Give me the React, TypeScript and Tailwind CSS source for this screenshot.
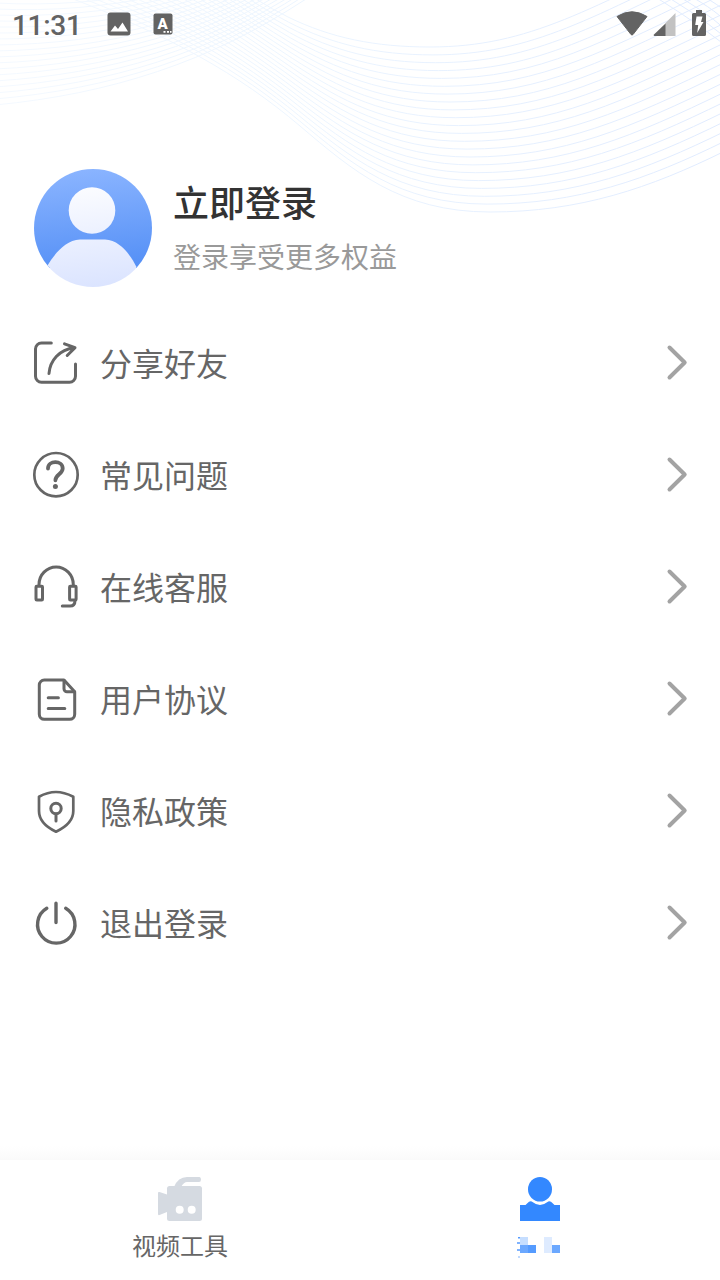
import React, { useState } from "react";

const LINE_COUNT = 22;

const lerp = (a: number, b: number, t: number) => a + (b - a) * t;

// Interpolates every number of two point lists with the same length
const mix = (a: number[], b: number[], t: number) => a.map((v, i) => lerp(v, b[i], t).toFixed(1));

const WAVE_TOP = [180, -52, 210, -35, 245, -4, 288, 17, 331, 38, 375, 47, 430, 47, 530, 47, 590, 8, 725, -56];
const WAVE_BOTTOM = [60, -6, 170, 35, 240, 75, 300, 126, 352, 170, 400, 212, 490, 212, 580, 212, 650, 188, 725, 151];

const Waves: React.FC = () => (
  <svg className="absolute left-0 top-0" width="720" height="230" viewBox="0 0 720 230" fill="none">
    <defs>
      <linearGradient id="wave" gradientUnits="userSpaceOnUse" x1="0" y1="0" x2="720" y2="0">
        <stop offset="0" stopColor="#f4f9ff" />
        <stop offset="0.4" stopColor="#ecf5ff" />
        <stop offset="1" stopColor="#e0ebff" />
      </linearGradient>
    </defs>
    <g stroke="url(#wave)" strokeWidth="1">
      {Array.from({ length: LINE_COUNT }, (_, i) => {
        const p = mix(WAVE_TOP, WAVE_BOTTOM, i / (LINE_COUNT - 1));
        return (
          <path
            key={i}
            d={`M${p[0]} ${p[1]}C${p.slice(2, 8).join(" ")}C${p.slice(8, 14).join(" ")}C${p.slice(14, 20).join(" ")}`}
          />
        );
      })}
      {Array.from({ length: 20 }, (_, i) => (
        <path key={i} d={`M-5 ${105 - i * 6}C110 ${94 - i * 5} 210 ${62 - i * 4.5} ${306 - i * 2} ${-1 - i * 3}`} />
      ))}
      {Array.from({ length: 6 }, (_, i) => (
        <path key={i} d={`M${640 + i * 12} -12Q${682 + i * 11} ${12 - i} 725 ${45 - i * 8}`} />
      ))}
    </g>
  </svg>
);

const StatusBar: React.FC = () => (
  <div className="relative flex h-12 items-center justify-between pl-3 pr-[13px] text-[#636363]">
    <div className="flex items-center">
      <span className="w-[95px] pt-[3px] font-[Roboto,sans-serif] text-[28px] font-medium leading-none tracking-[-0.3px]">11:31</span>
      <svg width="24" height="24" viewBox="0 0 24 24">
        <rect x="0.5" y="0.5" width="23" height="23" rx="3" fill="currentColor" />
        <path d="M3.500 19.500l4.500-6 3 3.500 4.500-6.500 5.500 9z" fill="#fff" />
      </svg>
      <svg className="ml-[22px]" width="20" height="22" viewBox="0 0 20 22">
        <rect x="0.500" y="0.500" width="19" height="21" rx="2" fill="currentColor" />
        <text x="9.700" y="15.500" textAnchor="middle" fontSize="15" fontWeight="900" fontFamily="Roboto, sans-serif" fill="#fff">A</text>
        <path d="M10.500 18.800h2M14 18.800h2M17 18.800h1.500" stroke="#fff" strokeWidth="1.800" />
      </svg>
    </div>
    <div className="flex items-center">
      <svg width="32" height="26" viewBox="0 0 32 26">
        <path d="M1 5.500Q16-4 31 5.500L17 23.500q-1 1-2 0z" fill="currentColor" stroke="currentColor" strokeLinejoin="round" />
      </svg>
      <svg className="ml-[5px]" width="23" height="26" viewBox="0 0 23 26">
        <path d="M22.500 2v23H12V12.500z" fill="#c2c2c2" />
        <path d="M12.500 12.500V25H1.500q-1.500-.5-.5-1.500z" fill="currentColor" />
      </svg>
      <svg className="-mt-0.5 ml-[15px]" width="16" height="28" viewBox="0 0 16 28">
        <path d="M5 1h6v3h2.500q1.500 0 1.500 1.500v20q0 1.500-1.500 1.500h-11Q1 27 1 25.500v-20Q1 4 2.500 4H5z" fill="currentColor" />
        <path d="M5.500 7.500h6l-1.500 5.500h2.500L6.200 24l1-8H4.200z" fill="#fff" />
      </svg>
    </div>
  </div>
);

const Avatar: React.FC = () => (
  <svg width="118" height="118" viewBox="0 0 118 118">
    <defs>
      <linearGradient id="disc" x1="0.45" y1="0" x2="0.55" y2="1">
        <stop offset="0" stopColor="#8ab4ff" />
        <stop offset="0.85" stopColor="#5590f6" />
      </linearGradient>
      <linearGradient id="figure" gradientUnits="userSpaceOnUse" x1="50" y1="18" x2="62" y2="118">
        <stop offset="0" stopColor="#fbfcff" />
        <stop offset="1" stopColor="#dbe4ff" />
      </linearGradient>
      <clipPath id="round">
        <circle cx="59" cy="59" r="59" />
      </clipPath>
      <clipPath id="upper">
        <path d="M0 0h118v99H0z" />
      </clipPath>
    </defs>
    <circle cx="59" cy="59" r="59" fill="url(#disc)" clipPath="url(#upper)" />
    <g fill="url(#figure)" clipPath="url(#round)">
      <circle cx="58" cy="41.500" r="23.300" />
      <path d="M13.500 96.500C20 86 31 71 46 70.600H71C86 71 97 87 102.500 98L102 118H14z" />
    </g>
  </svg>
);

const ICONS: Record<string, React.ReactNode> = {
  share: (
    <>
      <path d="M19.300 4H9.500a6 6 0 0 0-6 6v27.300a6 6 0 0 0 6 6h28a6 6 0 0 0 6-6V25" />
      <path d="M17 34.500C18 22 27 10.500 42.500 8.800M32.500 4.800L43 8.700l-7.800 7.800" />
    </>
  ),
  question: (
    <>
      <circle cx="24" cy="23.700" r="21.700" strokeWidth="2.700" />
      <path d="M16 17.500c0-8.500 14.700-8.500 14.700 0 0 5.500-7.300 6-7.300 11.800" strokeWidth="3.800" />
      <circle cx="23.400" cy="35.500" r="2.500" fill="currentColor" stroke="none" />
    </>
  ),
  headset: (
    <>
      <path d="M7 22.500V21.500a17.100 17.500 0 0 1 34.300 0v1" />
      <rect x="4" y="23.300" width="6.500" height="13.700" rx="0.800" />
      <rect x="37.600" y="23.300" width="6.500" height="13.700" rx="0.800" />
      <path d="M43 37.500c0 4-1.500 5.600-5 5.600h-7.700" />
    </>
  ),
  doc: (
    <>
      <path d="M32 5H12.300a5 5 0 0 0-5 5v29.300a5 5 0 0 0 5 5h25.400a5 5 0 0 0 5-5V16.700z" />
      <path d="M32 5.500v8.200a3 3 0 0 0 3 3h7.500M16.200 22.700h10.200M16.200 33.500h16.600" />
    </>
  ),
  shield: (
    <>
      <path d="M24 5C18.500 5 11.500 7.300 7 9.800V24C7 33 13 39.500 24 44.700 35 39.500 41.300 33 41.300 24V9.800C36.500 7.300 29.500 5 24 5z" strokeWidth="2.700" />
      <circle cx="24" cy="21.500" r="5.200" />
      <path d="M24 27v7" />
    </>
  ),
  power: <path d="M14.800 9.300a18.700 18.700 0 1 0 18.900 0M24 4.200v19.300" strokeWidth="3.400" />,
};

const MENU = [
  { icon: "share", label: "分享好友" },
  { icon: "question", label: "常见问题" },
  { icon: "headset", label: "在线客服" },
  { icon: "doc", label: "用户协议" },
  { icon: "shield", label: "隐私政策" },
  { icon: "power", label: "退出登录" },
];

const MenuRow: React.FC<{ icon: string; label: string }> = ({ icon, label }) => (
  <button className="flex h-28 w-full items-center pl-8 pr-[31px] text-left text-[#666]">
    <svg width="48" height="48" viewBox="0 0 48 48" fill="none" stroke="currentColor" strokeWidth="3" strokeLinecap="round" strokeLinejoin="round">
      {ICONS[icon]}
    </svg>
    <span className="ml-5 flex-1 pb-[3px] text-[32px] leading-[48px]">{label}</span>
    <svg width="24" height="40" viewBox="0 0 24 40" fill="none" stroke="#a3a3a3" strokeWidth="4" strokeLinecap="round" strokeLinejoin="round">
      <path d="M4.500 4.500L19.700 19.500 4.500 34.500" />
    </svg>
  </button>
);

const VideoIcon: React.FC = () => (
  <svg width="48" height="48" viewBox="0 0 48 48" fill="#d5dae1">
    <path d="M2 17q0-1.500 1.500-1L11 18.500V36l-7.500 3Q2 39.500 2 38z" />
    <rect x="11" y="10" width="35" height="35" rx="2.500" />
    <path d="M18 11Q22 1 31 1h12.500q1.500 0 1.500 2.500T43 6H31q-3 0-6 5z" />
    <circle cx="23.700" cy="33.700" r="4" fill="#fff" />
    <circle cx="35.700" cy="33.700" r="4" fill="#fff" />
  </svg>
);

const MineIcon: React.FC = () => (
  <svg width="48" height="88" viewBox="0 0 48 88" fill="#3388ff">
    <ellipse cx="24" cy="13.300" rx="12" ry="12.300" />
    <path d="M4 29h5.500l3.500-3.200q2-1.300 3.500.2 7.500 6 15 0 1.500-1.500 3.500-.2l3.500 3.200H44v16H4z" />
    <path d="M4 61h8v8H4z" fill="#c6deff" />
    <path d="M4 69h8v8H4z" fill="#6ba8ff" />
    <path d="M12 69h8v8h-8z" fill="#559bff" />
    <path d="M28 61h8v16h-8z" fill="#deebff" />
    <path d="M36 69h8v8h-8z" fill="#6ba8ff" />
    <path d="M2 61.800h2M1 67h3M1 74h3M2.500 81h1" stroke="#559bff" strokeWidth="1.600" />
  </svg>
);

export default function App() {
  const [, setTab] = useState("mine");

  return (
    <div className="relative flex h-[1280px] w-[720px] flex-col overflow-hidden bg-white font-['Noto_Sans_CJK_SC',sans-serif]">
      <Waves />
      <StatusBar />

      {/* Login header */}
      <div className="relative mt-[121px] flex h-[118px] pl-[34px]">
        <Avatar />
        <div className="ml-[21px] pt-[5px]">
          <h1 className="text-[36px] font-medium leading-[54px] text-[#333]">立即登录</h1>
          <p className="mt-[7px] text-[28px] leading-[42px] text-[#999]">登录享受更多权益</p>
        </div>
      </div>

      <div className="mt-5 flex-1">
        {MENU.map((item) => (
          <MenuRow key={item.icon} icon={item.icon} label={item.label} />
        ))}
      </div>

      {/* Bottom tabs */}
      <div className="h-3.5 bg-gradient-to-b from-white to-[#fafafa]" />
      <nav className="flex h-[120px] bg-white">
        <button onClick={() => setTab("video")} className="flex flex-1 flex-col items-center pt-4">
          <VideoIcon />
          <span className="mt-[3px] text-[24px] leading-9 text-[#666]">视频工具</span>
        </button>
        <button onClick={() => setTab("mine")} className="flex flex-1 flex-col items-center pt-4">
          <MineIcon />
        </button>
      </nav>
    </div>
  );
}
